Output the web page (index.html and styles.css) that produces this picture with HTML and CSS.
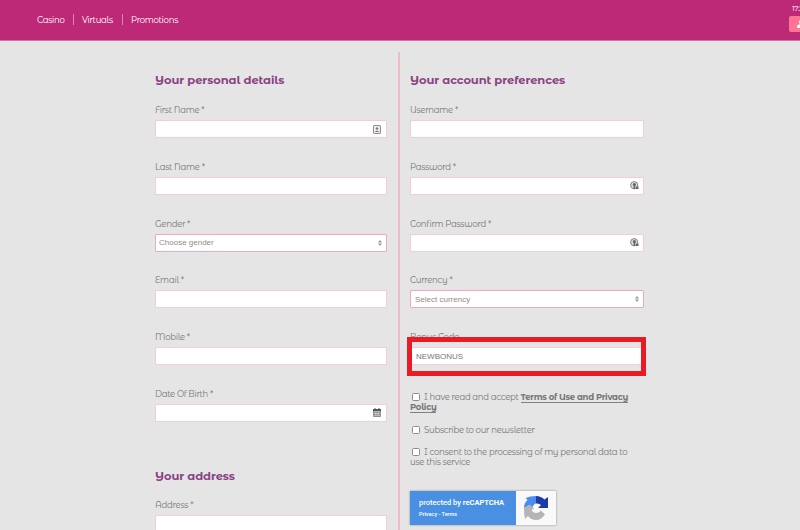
FILE: index.html
```html
<!DOCTYPE html>
<html lang="en">
<head>
  <meta charset="UTF-8">
  <meta name="viewport" content="width=device-width, initial-scale=1.0">
  <title>Register</title>
  <link rel="stylesheet" href="styles.css">
</head>
<body>
  <header class="topbar">
    <nav class="menu">
      <a class="menu-casino">Casino</a>
      <a class="menu-virtuals">Virtuals</a>
      <a class="menu-promotions">Promotions</a>
    </nav>
    <div class="account">
      <span class="clock">17:24</span>
      <div class="login">
        <svg width="10" height="8" viewBox="0 0 10 8"><circle cx="4" cy="2" r="2" fill="#fff"/><path d="M0 8V6.500Q0 4.500 2 4.500H6Q8 4.500 8 6.500V8Z" fill="#fff"/></svg>
      </div>
    </div>
  </header>

  <form class="form">
    <div class="column details">
      <h2>Your personal details</h2>
      <div class="field">
        <label>First Name *</label>
        <div class="input">
          <svg class="icon" width="8" height="9" viewBox="0 0 8 9"><rect x=".5" y=".5" width="7" height="8" rx=".6" fill="#eee" stroke="#8b8b8b"/><path d="M4 2v3.500M2.700 3.500h2.600M2.300 6.500h3.400" stroke="#777" fill="none"/></svg>
        </div>
      </div>
      <div class="field">
        <label>Last Name *</label>
        <div class="input"></div>
      </div>
      <div class="field">
        <label>Gender *</label>
        <div class="input select">
          <span>Choose gender</span>
          <svg class="arrows" width="4" height="6" viewBox="0 0 4 6"><path d="M0 2.500L2 0l2 2.500zM0 3.500h4L2 6z" fill="#999"/></svg>
        </div>
      </div>
      <div class="field">
        <label>Email *</label>
        <div class="input"></div>
      </div>
      <div class="field">
        <label>Mobile *</label>
        <div class="input"></div>
      </div>
      <div class="field">
        <label>Date Of Birth *</label>
        <div class="input">
          <svg class="icon" width="8" height="9" viewBox="0 0 8 9"><rect y="1" width="8" height="8" rx=".8" fill="#8d9191"/><path d="M0 1h8v2H0zM1.500 0h1v2h-1zM5.500 0h1v2h-1z" fill="#50585a"/><path d="M.800 3.600h6.400M.800 5.500h6.400M.800 7.300h6.400M2.800 3.500V8M5.200 3.500V8" stroke="#ddd" stroke-width=".5"/></svg>
        </div>
      </div>
      <h2 class="address">Your address</h2>
      <div class="field">
        <label>Address *</label>
        <div class="input"></div>
      </div>
    </div>

    <div class="column account-prefs">
      <h2>Your account preferences</h2>
      <div class="field">
        <label>Username *</label>
        <div class="input"></div>
      </div>
      <div class="field">
        <label>Password *</label>
        <div class="input">
          <svg class="icon key" width="9" height="9" viewBox="0 0 9 9"><circle cx="4.200" cy="4.200" r="3.600" fill="#ddd" stroke="#777" stroke-width=".9"/><circle cx="4.400" cy="3.600" r="1.600" fill="#666"/><path d="M3.600 4h1.600v4H3.600zM6 5.500h2.500v2.500H6z" fill="#666"/></svg>
        </div>
      </div>
      <div class="field">
        <label>Confirm Password *</label>
        <div class="input">
          <svg class="icon key" width="9" height="9" viewBox="0 0 9 9"><circle cx="4.200" cy="4.200" r="3.600" fill="#ddd" stroke="#777" stroke-width=".9"/><circle cx="4.400" cy="3.600" r="1.600" fill="#666"/><path d="M3.600 4h1.600v4H3.600zM6 5.500h2.500v2.500H6z" fill="#666"/></svg>
        </div>
      </div>
      <div class="field">
        <label>Currency *</label>
        <div class="input select">
          <span>Select currency</span>
          <svg class="arrows" width="4" height="6" viewBox="0 0 4 6"><path d="M0 2.500L2 0l2 2.500zM0 3.500h4L2 6z" fill="#999"/></svg>
        </div>
      </div>
      <div class="field bonus">
        <label>Bonus Code</label>
        <div class="input"><span>NEWBONUS</span></div>
        <div class="highlight"></div>
      </div>
      <p class="check terms"><input type="checkbox">I have read and accept <a>Terms of Use and Privacy</a><br><a>Policy</a></p>
      <p class="check news"><input type="checkbox">Subscribe to our newsletter</p>
      <p class="check consent"><input type="checkbox">I consent to the processing of my personal data to<br>use this service</p>
      <div class="captcha">
        <div class="captcha-text">
          <span>protected by <b>reCAPTCHA</b></span>
          <small>Privacy - Terms</small>
        </div>
        <div class="captcha-logo">
          <svg width="24" height="24" viewBox="0 0 24 24">
            <path d="M12 0V7.500Q9 8 8.500 12L5.500 9.500L0 12Q0 7 3.500 4L1.500 2Q6 0 12 0Z" fill="#4a8df0"/>
            <path d="M12 0Q17 0 20.500 3.500L24 1V12H14L17 9Q15 7 12 7.500Z" fill="#1c3aa9"/>
            <path d="M0 12L5.500 8.500L10 12.500L7.500 14Q9 17 12 17Q15 17 17 14.500L21 18.500Q17 24 12 24Q7 24 4 20L1 23Q0 18 0 12Z" fill="#b5b5b5"/>
          </svg>
        </div>
      </div>
    </div>
  </form>
</body>
</html>
```

FILE: styles.css
```css
* {
  box-sizing: border-box;
}

body {
  margin: 0;
  height: 530px;
  overflow: hidden;
  background: #e5e5e5;
  color: #777;
  font-family: "Montserrat Alternates", Montserrat, Lato, sans-serif;
  font-size: 8.500px;
  letter-spacing: -.27px;
}

.topbar {
  display: flex;
  justify-content: space-between;
  height: 41px;
  background: #bd2976;
  border-bottom: 1px solid #d273a5;
  color: #fff;
}

.menu {
  display: flex;
  padding: 14px 0 0 28px;
}

.menu a {
  height: 11px;
  padding: 0 8px;
  line-height: 12px;
  white-space: nowrap;
}

.menu a + a {
  border-left: 1px solid #dc83b1;
}

.menu .menu-casino {
  width: 45px;
  padding-left: 9px;
}

.menu-virtuals {
  width: 49px;
}

.account {
  width: 11px;
  overflow: hidden;
  white-space: nowrap;
}

.clock {
  display: block;
  height: 16px;
  padding: 4px 0 0 3px;
  font-size: 7px;
  line-height: 9px;
}

.login {
  height: 16px;
  padding: 4px 0 0 8px;
  line-height: 0;
  background: #fd7495;
  border-radius: 2px 0 0 2px;
}

.form {
  display: flex;
  height: 478px;
  margin: 11px 0 0 155px;
}

.column {
  padding-top: 20px;
}

.details {
  width: 245px;
  padding-right: 11px;
  border-right: 2px solid #ecbac8;
}

.account-prefs {
  width: 244px;
  padding-left: 10px;
}

h2 {
  height: 31px;
  margin: 0;
  color: #8a4384;
  font-size: 11.500px;
  line-height: 16px;
  letter-spacing: -.08px;
  white-space: nowrap;
}

.address {
  margin-top: 24px;
  height: 30px;
}

.field {
  height: 56.8px;
}

.field label {
  display: block;
  height: 17px;
  line-height: 15px;
}

.input {
  display: flex;
  align-items: center;
  height: 18px;
  padding: 0 5px;
  border: 1px solid #f5cbd5;
  border-radius: 1px;
  background: #fff;
  font-family: "Liberation Sans", Arial, sans-serif;
  font-size: 8px;
  letter-spacing: 0;
}

.select {
  padding: 0 4px;
  border-color: #f0a9bd;
  color: #978982;
}

.select span {
  margin-left: -1px;
}

.account-prefs .select span {
  margin-left: 0;
}

.icon,
.arrows {
  margin-left: auto;
}

.key {
  margin-right: -1px;
}

.bonus {
  position: relative;
}

/* red frame over the bonus code field */
.highlight {
  position: absolute;
  top: 7px;
  left: -3px;
  width: 239px;
  height: 39px;
  border: 5.500px solid #e91c26;
}

.check {
  margin: 0;
  line-height: 10.500px;
  white-space: nowrap;
}

.check input {
  appearance: none;
  width: 8px;
  height: 8px;
  margin: 0 4px 0 2px;
  border: 1px solid #8c8c8c;
  border-radius: 1.500px;
  background: #fff;
  vertical-align: -1px;
}

.check a {
  border-bottom: 1px solid #808080;
  font-weight: bold;
}

.terms {
  height: 38px;
  padding-top: 5px;
}

.news {
  height: 22px;
}

.consent {
  height: 44px;
}

.captcha {
  display: flex;
  width: 146px;
  height: 34px;
  box-shadow: 0 0 2px #888;
  font-family: Roboto, sans-serif;
  letter-spacing: 0;
}

.captcha-text {
  display: flex;
  flex-direction: column;
  width: 106px;
  padding: 6px 0 0 9px;
  background: #4a90e2;
  color: #fff;
  font-size: 7.500px;
  font-weight: 500;
  line-height: 11px;
  white-space: nowrap;
}

.captcha-text small {
  font-size: 5.500px;
  line-height: 12px;
}

.captcha-logo {
  display: flex;
  flex: 1;
  align-items: center;
  justify-content: center;
  background: #f9f9f9;
}
```
